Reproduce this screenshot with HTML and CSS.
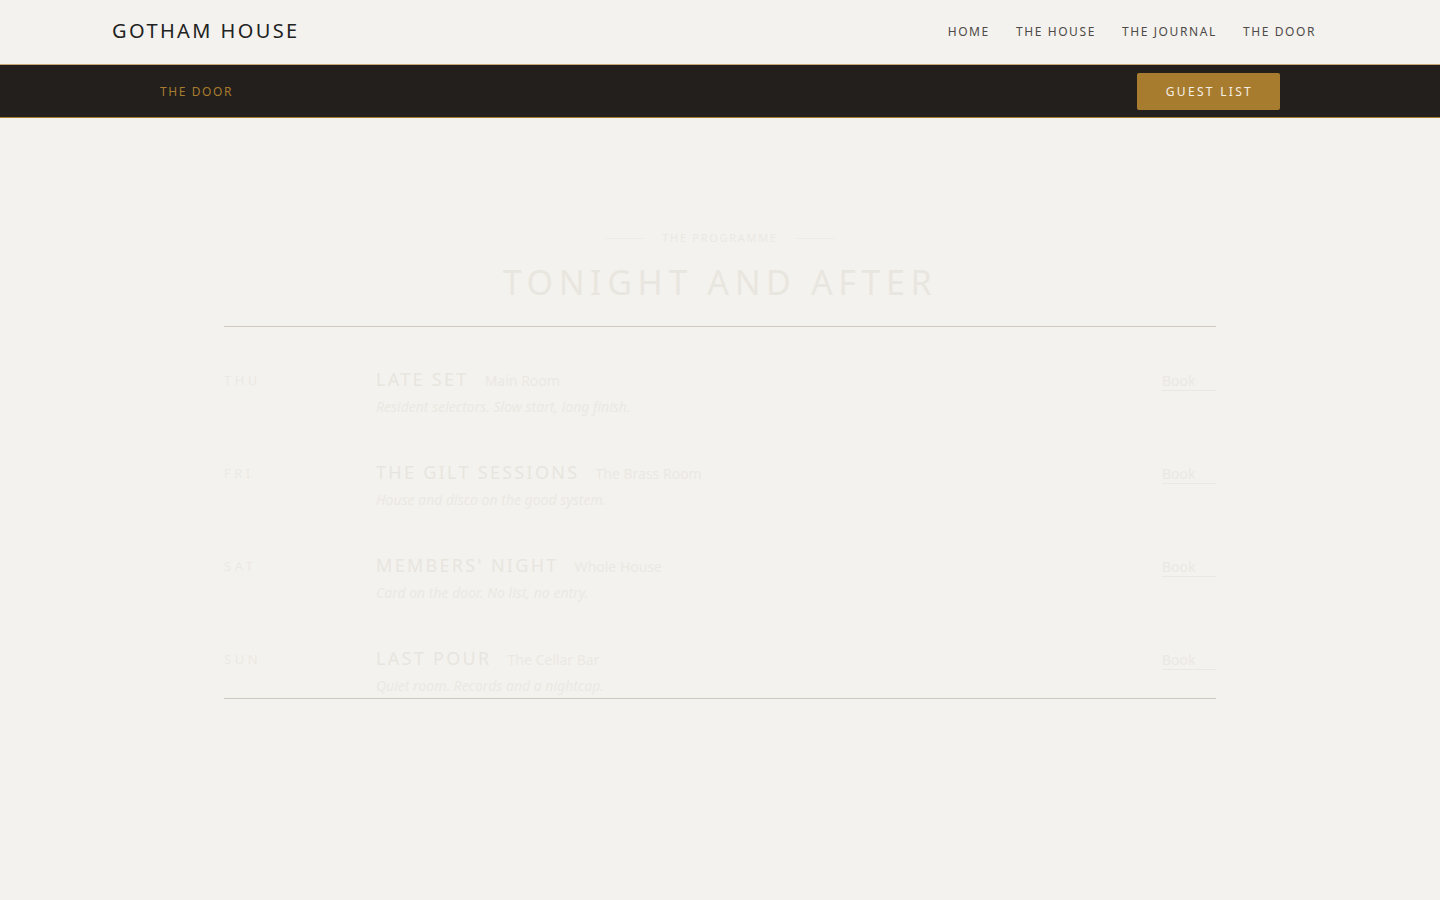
FILE: index.html
```html
<!DOCTYPE html>
<html lang="en">
<head>
<meta charset="utf-8">
<title>The Door — Gotham House</title>
<link rel="stylesheet" href="styles.css">
</head>
<body>
  <header class="site-header">
    <a class="logo" href="#">GOTHAM HOUSE</a>
    <nav class="main-nav">
      <a href="#">HOME</a>
      <a href="#">THE HOUSE</a>
      <a href="#">THE JOURNAL</a>
      <a href="#">THE DOOR</a>
    </nav>
  </header>

  <div class="sub-bar">
    <span class="sub-title">THE DOOR</span>
    <a class="btn-guest" href="#">GUEST LIST</a>
  </div>

  <main class="programme">
    <div class="programme-head">
      <div class="eyebrow"><span class="eyebrow-line"></span><span>THE PROGRAMME</span><span class="eyebrow-line"></span></div>
      <h1 class="programme-title">TONIGHT AND AFTER</h1>
    </div>

    <ul class="events">
      <li class="event">
        <span class="event-day">THU</span>
        <div class="event-body">
          <div class="event-line"><h2 class="event-name">LATE SET</h2><span class="event-venue">Main Room</span></div>
          <p class="event-desc">Resident selectors. Slow start, long finish.</p>
        </div>
        <a class="event-book" href="#">Book</a>
      </li>
      <li class="event">
        <span class="event-day">FRI</span>
        <div class="event-body">
          <div class="event-line"><h2 class="event-name">THE GILT SESSIONS</h2><span class="event-venue">The Brass Room</span></div>
          <p class="event-desc">House and disco on the good system.</p>
        </div>
        <a class="event-book" href="#">Book</a>
      </li>
      <li class="event">
        <span class="event-day">SAT</span>
        <div class="event-body">
          <div class="event-line"><h2 class="event-name">MEMBERS' NIGHT</h2><span class="event-venue">Whole House</span></div>
          <p class="event-desc">Card on the door. No list, no entry.</p>
        </div>
        <a class="event-book" href="#">Book</a>
      </li>
      <li class="event">
        <span class="event-day">SUN</span>
        <div class="event-body">
          <div class="event-line"><h2 class="event-name">LAST POUR</h2><span class="event-venue">The Cellar Bar</span></div>
          <p class="event-desc">Quiet room. Records and a nightcap.</p>
        </div>
        <a class="event-book" href="#">Book</a>
      </li>
    </ul>
  </main>
</body>
</html>
```

FILE: styles.css
```css
* { box-sizing: border-box; }

html, body {
  margin: 0;
  padding: 0;
  background: #f4f2ee;
  font-family: "Noto Sans", "Open Sans", sans-serif;
  color: #222;
}

a { text-decoration: none; color: inherit; }

/* top header */
.site-header {
  height: 65px;
  display: flex;
  align-items: center;
  justify-content: space-between;
  padding: 0 124px 2px 112px;
  border-bottom: 1px solid #c6a877;
}

.logo {
  font-size: 20px;
  line-height: 28px;
  letter-spacing: 2.4px;
  color: #222;
}

.main-nav {
  display: flex;
  gap: 26px;
}

.main-nav a {
  font-size: 12px;
  letter-spacing: 1.6px;
  color: #4d4a47;
}

/* dark sub bar */
.sub-bar {
  height: 53px;
  background: #221f1c;
  border-bottom: 1px solid #a87c2e;
  display: flex;
  align-items: center;
  justify-content: space-between;
  padding: 0 160px;
}

.sub-title {
  font-size: 12px;
  letter-spacing: 1.6px;
  color: #a87c2e;
}

.btn-guest {
  background: #a87c2e;
  color: #f4efe4;
  font-size: 12px;
  letter-spacing: 2.3px;
  padding: 10px 27px 10px 29px;
  line-height: 17px;
  border-radius: 2px;
}

/* programme section */
.programme {
  width: 992px;
  margin: 0 auto;
  padding-top: 112px;
}

.programme-head {
  text-align: center;
  padding-bottom: 23px;
  border-bottom: 1px solid #cfc9bf;
}

.eyebrow {
  display: flex;
  align-items: center;
  justify-content: center;
  gap: 18px;
  font-size: 11px;
  line-height: 16px;
  letter-spacing: 1.7px;
  color: #ebe8e3;
}

.eyebrow-line {
  width: 39px;
  height: 1px;
  background: #eeebe6;
}

.programme-title {
  margin: 16px 0 0;
  font-weight: 400;
  font-size: 34px;
  line-height: 41px;
  letter-spacing: 5.6px;
  color: #e9e6e0;
}

.events {
  list-style: none;
  margin: 0;
  padding: 0;
  border-bottom: 1px solid #cfc9bf;
}

.event {
  height: 93px;
  display: grid;
  grid-template-columns: 152px 1fr auto;
  align-items: start;
  padding-top: 40px;
}

.event:last-child {
  height: 92px;
}

.event-day {
  margin-top: 1px;
  font-size: 13px;
  line-height: 24px;
  letter-spacing: 3.5px;
  color: #ece9e4;
}

.event-line {
  display: flex;
  align-items: baseline;
  gap: 16px;
}

.event-name {
  margin: 0;
  font-weight: 400;
  font-size: 18px;
  line-height: 24px;
  letter-spacing: 2.3px;
  color: #e8e5df;
}

.event-venue {
  font-size: 14px;
  color: #ebe8e3;
}

.event-desc {
  margin: 6px 0 0;
  font-size: 14px;
  line-height: 20px;
  font-style: italic;
  color: #ebe8e3;
}

.event-book {
  margin-top: 4px;
  font-size: 14px;
  line-height: 19px;
  width: 54px;
  color: #ebe8e3;
  border-bottom: 1px solid #ebe8e3;
}
```
